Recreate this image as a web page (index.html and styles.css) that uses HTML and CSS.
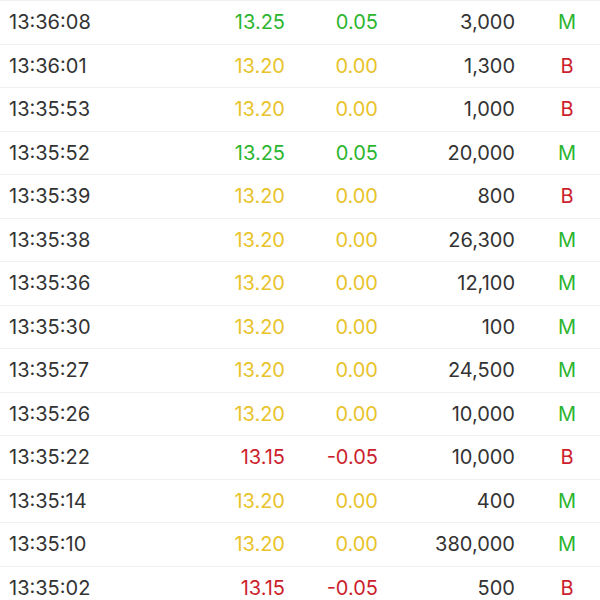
FILE: index.html
```html
<!DOCTYPE html>
<html>
<head>
<meta charset="utf-8">
<link rel="stylesheet" href="styles.css">
</head>
<body>
<div class="list">
  <div class="row"><span class="time">13:36:08</span><span class="price up">13.25</span><span class="chg up">0.05</span><span class="vol">3,000</span><span class="flag up">M</span></div>
  <div class="row"><span class="time">13:36:01</span><span class="price flat">13.20</span><span class="chg flat">0.00</span><span class="vol">1,300</span><span class="flag down">B</span></div>
  <div class="row"><span class="time">13:35:53</span><span class="price flat">13.20</span><span class="chg flat">0.00</span><span class="vol">1,000</span><span class="flag down">B</span></div>
  <div class="row"><span class="time">13:35:52</span><span class="price up">13.25</span><span class="chg up">0.05</span><span class="vol">20,000</span><span class="flag up">M</span></div>
  <div class="row"><span class="time">13:35:39</span><span class="price flat">13.20</span><span class="chg flat">0.00</span><span class="vol">800</span><span class="flag down">B</span></div>
  <div class="row"><span class="time">13:35:38</span><span class="price flat">13.20</span><span class="chg flat">0.00</span><span class="vol">26,300</span><span class="flag up">M</span></div>
  <div class="row"><span class="time">13:35:36</span><span class="price flat">13.20</span><span class="chg flat">0.00</span><span class="vol">12,100</span><span class="flag up">M</span></div>
  <div class="row"><span class="time">13:35:30</span><span class="price flat">13.20</span><span class="chg flat">0.00</span><span class="vol">100</span><span class="flag up">M</span></div>
  <div class="row"><span class="time">13:35:27</span><span class="price flat">13.20</span><span class="chg flat">0.00</span><span class="vol">24,500</span><span class="flag up">M</span></div>
  <div class="row"><span class="time">13:35:26</span><span class="price flat">13.20</span><span class="chg flat">0.00</span><span class="vol">10,000</span><span class="flag up">M</span></div>
  <div class="row"><span class="time">13:35:22</span><span class="price down">13.15</span><span class="chg down">-0.05</span><span class="vol">10,000</span><span class="flag down">B</span></div>
  <div class="row"><span class="time">13:35:14</span><span class="price flat">13.20</span><span class="chg flat">0.00</span><span class="vol">400</span><span class="flag up">M</span></div>
  <div class="row"><span class="time">13:35:10</span><span class="price flat">13.20</span><span class="chg flat">0.00</span><span class="vol">380,000</span><span class="flag up">M</span></div>
  <div class="row"><span class="time">13:35:02</span><span class="price down">13.15</span><span class="chg down">-0.05</span><span class="vol">500</span><span class="flag down">B</span></div>
</div>
</body>
</html>
```

FILE: styles.css
```css
html, body {
  margin: 0;
  padding: 0;
  background: #ffffff;
  overflow: hidden;
}
body {
  font-family: Inter, "Noto Sans", sans-serif;
  font-size: 20px;
  color: #333333;
}
.list {
  display: flex;
  flex-direction: column;
}
.row {
  box-sizing: border-box;
  height: 43.5px;
  border-top: 1px solid #f0f0f0;
  display: grid;
  grid-template-columns: 200px 76px 93px 137px 104px;
  align-items: center;
  padding-left: 9px;
}
.time { text-align: left; }
.price { text-align: right; }
.chg { text-align: right; }
.vol { text-align: right; }
.flag { text-align: center; }
.up { color: #2cb52f; }
.flat { color: #e8c32c; }
.down { color: #cc1e2d; }
```
